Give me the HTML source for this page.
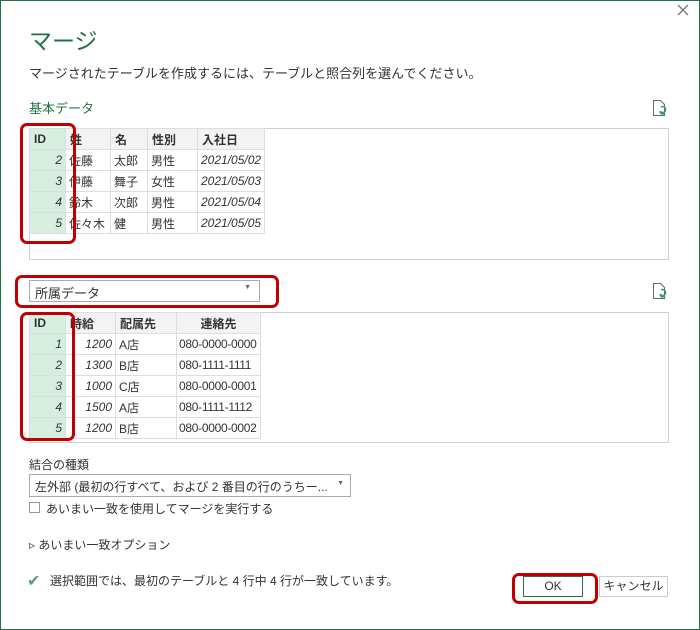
<!DOCTYPE html>
<html><head><meta charset="utf-8"><style>
*{margin:0;padding:0;box-sizing:border-box}
body{width:700px;height:630px;background:#fff;font-family:"Liberation Sans","Noto Sans CJK JP",sans-serif;font-size:12px;color:#333;position:relative;overflow:hidden}
.frame{position:absolute;left:0;top:0;width:700px;height:630px;border:1px solid #217346}
.a{position:absolute}
table{border-collapse:collapse;position:absolute;font-size:12px;table-layout:fixed}
td{border:1px solid #ddd;height:21px;padding:0 3px;white-space:nowrap;overflow:hidden}
th{border:1px solid #ddd;height:21px;background:#f3f3f3;font-weight:bold;text-align:left;padding:0 4px}
td.id,th.id{background:#d5eee0}
td.id{text-align:right;font-style:italic}
.it{font-style:italic}
.r{text-align:right}
td.ph{padding:0 2px;letter-spacing:-0.3px}
.red{position:absolute;border:3px solid #c00000;border-radius:7px}
.box{position:absolute;border:1px solid #d0d0d0}
</style></head><body>
<div class="frame"></div>
<svg class="a" style="left:677px;top:4px" width="12" height="12"><path d="M1 1L11 11M11 1L1 11" stroke="#777" stroke-width="1.3"/></svg>
<div class="a" style="left:29px;top:22px;font-size:23px;color:#217346">マージ</div>
<div class="a" style="left:29px;top:63px;font-size:13px;color:#333">マージされたテーブルを作成するには、テーブルと照合列を選んでください。</div>
<div class="a" style="left:29px;top:98px;font-size:13px;color:#217346">基本データ</div>
<svg class="a" style="left:652px;top:99px" width="16" height="18"><path d="M1.5 1.5h7l4 4v11h-11z" fill="none" stroke="#666"/><path d="M9 8a3 3 0 1 1-1 4M13 14a3 3 0 0 1-5-1" fill="none" stroke="#3a9b6b" stroke-width="1.5"/></svg>
<div class="box" style="left:29px;top:128px;width:640px;height:132px"></div>
<table style="left:29px;top:128px;width:235px">
<col style="width:36px"><col style="width:45px"><col style="width:37px"><col style="width:50px"><col style="width:67px">
<tr><th class="id">ID</th><th>姓</th><th>名</th><th>性別</th><th>入社日</th></tr>
<tr><td class="id">2</td><td>佐藤</td><td>太郎</td><td>男性</td><td class="it">2021/05/02</td></tr>
<tr><td class="id">3</td><td>伊藤</td><td>舞子</td><td>女性</td><td class="it">2021/05/03</td></tr>
<tr><td class="id">4</td><td>鈴木</td><td>次郎</td><td>男性</td><td class="it">2021/05/04</td></tr>
<tr><td class="id">5</td><td>佐々木</td><td>健</td><td>男性</td><td class="it">2021/05/05</td></tr>
</table>
<div class="red" style="left:20px;top:123px;width:56px;height:121px"></div>
<div class="a" style="left:29px;top:280px;width:231px;height:22px;border:1px solid #aaa;padding:2px 5px;font-size:13px">所属データ<span style="position:absolute;right:8px;top:3px;font-size:7px;color:#666">▼</span></div>
<div class="red" style="left:15px;top:275px;width:264px;height:33px"></div>
<svg class="a" style="left:652px;top:282px" width="16" height="18"><path d="M1.5 1.5h7l4 4v11h-11z" fill="none" stroke="#666"/><path d="M9 8a3 3 0 1 1-1 4M13 14a3 3 0 0 1-5-1" fill="none" stroke="#3a9b6b" stroke-width="1.5"/></svg>
<div class="box" style="left:29px;top:312px;width:640px;height:131px"></div>
<table style="left:29px;top:312px;width:231px">
<col style="width:36px"><col style="width:50px"><col style="width:61px"><col style="width:84px">
<tr><th class="id">ID</th><th>時給</th><th>配属先</th><th style="text-align:center">連絡先</th></tr>
<tr><td class="id">1</td><td class="it r">1200</td><td>A店</td><td class="ph">080-0000-0000</td></tr>
<tr><td class="id">2</td><td class="it r">1300</td><td>B店</td><td class="ph">080-1111-1111</td></tr>
<tr><td class="id">3</td><td class="it r">1000</td><td>C店</td><td class="ph">080-0000-0001</td></tr>
<tr><td class="id">4</td><td class="it r">1500</td><td>A店</td><td class="ph">080-1111-1112</td></tr>
<tr><td class="id">5</td><td class="it r">1200</td><td>B店</td><td class="ph">080-0000-0002</td></tr>
</table>
<div class="red" style="left:20px;top:312px;width:55px;height:129px"></div>
<div class="a" style="left:29px;top:456px">結合の種類</div>
<div class="a" style="left:29px;top:474px;width:322px;height:23px;border:1px solid #aaa;padding:3px 5px">左外部 (最初の行すべて、および 2 番目の行のうちー...<span style="position:absolute;right:6px;top:5px;font-size:7px;color:#666">▼</span></div>
<div class="a" style="left:29px;top:502px;width:11px;height:11px;border:1px solid #999"></div>
<div class="a" style="left:46px;top:500px">あいまい一致を使用してマージを実行する</div>
<div class="a" style="left:29px;top:536px;font-size:12px">▹ あいまい一致オプション</div>
<div class="a" style="left:27px;top:571px;font-size:16px;color:#5a9e7a">✔</div>
<div class="a" style="left:50px;top:572px">選択範囲では、最初のテーブルと 4 行中 4 行が一致しています。</div>
<div class="a" style="left:523px;top:576px;width:60px;height:21px;border:1px solid #217346;text-align:center;line-height:19px">OK</div>
<div class="a" style="left:599px;top:576px;width:69px;height:21px;border:1px solid #ccc;text-align:center;line-height:19px">キャンセル</div>
<div class="red" style="left:512px;top:573px;width:86px;height:31px"></div>
</body></html>
